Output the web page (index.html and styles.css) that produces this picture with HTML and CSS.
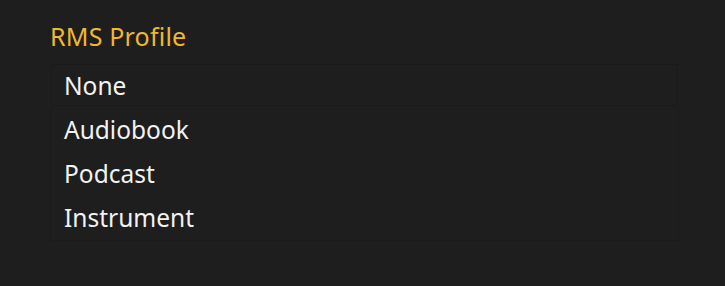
FILE: index.html
```html
<!DOCTYPE html>
<html lang="en">
<head>
  <meta charset="UTF-8">
  <title>RMS Profile</title>
  <link rel="stylesheet" href="styles.css">
</head>
<body>

<div class="panel">
  <div class="label">RMS Profile</div>
  <div class="selected">None</div>
  <ul class="options">
    <li>Audiobook</li>
    <li>Podcast</li>
    <li>Instrument</li>
  </ul>
</div>

</body>
</html>
```

FILE: styles.css
```css
body {
  margin: 0;
  background: #1e1e1e;
  font-family: "Noto Sans", "Open Sans", sans-serif;
  color: #f2f2f2;
}

.panel {
  padding: 21px 46px 0 50px;
}

.label {
  color: #f0b72f;
  font-size: 25px;
  line-height: 30px;
  margin-bottom: 13px;
  letter-spacing: 0.2px;
}

.selected {
  margin: 0 1px;
  height: 42px;
  line-height: 42px;
  padding-left: 12px;
  font-size: 24.5px;
  background: #1e1e1e;
  border: 1px solid #1a1a1a;
  box-sizing: border-box;
}

.options {
  list-style: none;
  margin: 2px 0 0;
  padding: 0;
  background: #1e1e1e;
  border: 1px solid #1b1b1b;
  border-top: none;
}

.options li {
  height: 44px;
  line-height: 44px;
  padding-left: 13px;
  font-size: 24.5px;
}
```
